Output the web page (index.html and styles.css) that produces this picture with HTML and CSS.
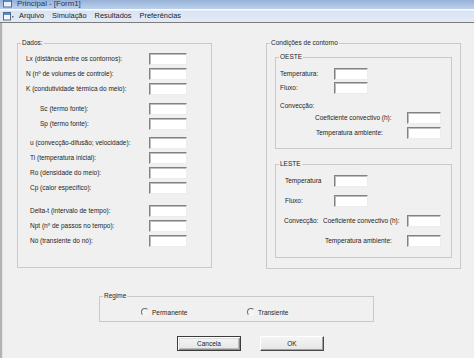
FILE: index.html
```html
<!DOCTYPE html>
<html lang="pt">
<head>
<meta charset="utf-8">
<title>Principal - [Form1]</title>
<link rel="stylesheet" href="styles.css">
</head>
<body>
<div class="window">
  <div class="titlebar">
    <svg class="title-icon" width="9" height="8" viewBox="0 0 9 8"><rect x="0.5" y="-1" width="8" height="8" fill="#e8eef7" stroke="#50709c"/><rect x="1" y="-1" width="7" height="3" fill="#5b86c0"/></svg>
    <span class="title">Principal - [Form1]</span>
  </div>
  <div class="menubar">
    <svg class="menu-icon" width="11" height="9" viewBox="0 0 11 9"><rect x="0.5" y="0.5" width="7" height="7.5" fill="#f4f7fb" stroke="#4d6a94"/><rect x="1" y="1" width="6" height="2" fill="#5f8ac4"/><rect x="9" y="4" width="1.5" height="1.5" fill="#6a6a6a"/></svg>
    <span class="menu-item first">Arquivo</span>
    <span class="menu-item">Simulação</span>
    <span class="menu-item">Resultados</span>
    <span class="menu-item">Preferências</span>
  </div>
  <div class="client">
    <div class="groups">
      <div class="group dados">
        <span class="legend">Dados:</span>
        <div class="rows">
          <div class="sec">
            <div class="row"><span class="lbl">Lx (distância entre os contornos):</span><span class="input"></span></div>
            <div class="row"><span class="lbl">N (nº de volumes de controle):</span><span class="input"></span></div>
            <div class="row"><span class="lbl">K (condutividade térmica do meio):</span><span class="input"></span></div>
          </div>
          <div class="sec sec2">
            <div class="row"><span class="lbl">Sc (termo fonte):</span><span class="input"></span></div>
            <div class="row"><span class="lbl">Sp (termo fonte):</span><span class="input"></span></div>
          </div>
          <div class="sec sec3">
            <div class="row"><span class="lbl">u (convecção-difusão; velocidade):</span><span class="input"></span></div>
            <div class="row"><span class="lbl">Ti (temperatura inicial):</span><span class="input"></span></div>
            <div class="row"><span class="lbl">Ro (densidade do meio):</span><span class="input"></span></div>
            <div class="row"><span class="lbl">Cp (calor específico):</span><span class="input"></span></div>
          </div>
          <div class="sec sec4">
            <div class="row"><span class="lbl">Delta-t (intervalo de tempo):</span><span class="input"></span></div>
            <div class="row"><span class="lbl">Npt (nº de passos no tempo):</span><span class="input"></span></div>
            <div class="row"><span class="lbl">Nó (transiente do nó):</span><span class="input"></span></div>
          </div>
        </div>
      </div>
      <div class="group contorno">
        <span class="legend">Condições de contorno</span>
        <div class="group sub oeste">
          <span class="legend">OESTE</span>
          <div class="row"><span class="lbl w54">Temperatura:</span><span class="input small"></span></div>
          <div class="row mt2"><span class="lbl w54">Fluxo:</span><span class="input small"></span></div>
          <div class="conv-title">Convecção:</div>
          <div class="row mt2 ind35"><span class="lbl flex">Coeficiente convectivo (h):</span><span class="input small"></span></div>
          <div class="row mt3 ind36"><span class="lbl flex">Temperatura ambiente:</span><span class="input small"></span></div>
        </div>
        <div class="group sub leste">
          <span class="legend">LESTE</span>
          <div class="row"><span class="lbl w49">Temperatura</span><span class="input small"></span></div>
          <div class="row mt8"><span class="lbl w49">Fluxo:</span><span class="input small"></span></div>
          <div class="row mt8"><span class="lbl conv">Convecção:</span><span class="lbl flex">Coeficiente convectivo (h):</span><span class="input small"></span></div>
          <div class="row mt8 ind40"><span class="lbl flex">Temperatura ambiente:</span><span class="input small"></span></div>
        </div>
      </div>
    </div>
    <div class="group regime">
      <span class="legend">Regime</span>
      <div class="radios">
        <label class="option"><span class="radio"></span><span>Permanente</span></label>
        <label class="option"><span class="radio"></span><span>Transiente</span></label>
      </div>
    </div>
    <div class="buttons">
      <button class="btn default">Cancela</button>
      <button class="btn">OK</button>
    </div>
  </div>
</div>
</body>
</html>
```
FILE: styles.css
```css
* { box-sizing: border-box; }
html, body { margin: 0; padding: 0; }
body {
  width: 474px;
  height: 358px;
  overflow: hidden;
  background: #f0f0f0;
  font-family: "Liberation Sans", Arial, sans-serif;
  color: #1d1d1d;
}
.window { display: flex; flex-direction: column; height: 358px; }

.titlebar {
  height: 9px;
  overflow: hidden;
  background: linear-gradient(#96b1d6, #a9c1e2 50%, #bcd0ea);
  display: flex;
  align-items: flex-end;
  padding-left: 3px;
}
.title-icon { margin-bottom: 1px; }
.title {
  font-size: 7.8px;
  line-height: 9px;
  margin-left: 5px;
  margin-bottom: 1px;
  color: #24385a;
}

.menubar {
  height: 14px;
  display: flex;
  align-items: center;
  padding-left: 3px;
  background: linear-gradient(#fbfdff 0, #fbfdff 1px, #d9e4f3 2px, #e2eaf5 100%);
  border-bottom: 1px solid #7b7b7b;
  font-size: 7.4px;
  color: #222;
}
.menu-icon { margin-top: 1px; }
.menu-item { padding: 0 4px; }
.menu-item.first { margin-left: 1px; }

.client {
  flex: 1;
  display: flex;
  flex-direction: column;
  border-left: 2px solid #b3b3b3;
  box-shadow: inset 1px 0 0 #e4e4e4;
  padding-left: 15px;
  font-size: 6.5px;
}
.groups { display: flex; gap: 54px; margin-top: 20px; }

.group { position: relative; border: 1px solid #c6cacd; }
.legend {
  position: absolute;
  top: -5px;
  left: 3px;
  padding: 0 1px;
  background: #f0f0f0;
  line-height: 8px;
  white-space: nowrap;
}

.dados { width: 195px; height: 225px; padding: 9px 24px 0 8px; }
.rows, .sec { display: flex; flex-direction: column; gap: 3px; }
.sec2 { margin-top: 5px; }
.sec3 { margin-top: 4px; }
.sec4 { margin-top: 8px; }
.sec2 .lbl { padding-left: 14px; }
.sec3 .lbl, .sec4 .lbl { padding-left: 4px; }

.row { display: flex; align-items: center; height: 12px; }
.lbl { flex: 1; white-space: nowrap; line-height: 8px; }
.lbl.flex { flex: 1; }
.input {
  flex: none;
  width: 38px;
  height: 12px;
  background: #fff;
  border: 1px solid;
  border-color: #828282 #ececec #ececec #828282;
  box-shadow: inset 1px 1px 0 #bdbdbd;
}
.input.small { width: 34px; }

.contorno { width: 195px; height: 226px; padding: 13px 8px 0 8px; }
.sub { width: 177px; }
.oeste { height: 92px; padding: 10px 0 0 4px; }
.leste { height: 94px; margin-top: 15px; padding: 10px 0 0 9px; }
.w54 { flex: none; width: 54px; }
.w49 { flex: none; width: 49px; }
.conv { flex: none; width: 39px; margin-left: -1px; }
.mt2 { margin-top: 2px; }
.mt3 { margin-top: 3px; }
.mt8 { margin-top: 8px; }
.ind35 { padding-left: 35px; }
.ind36 { padding-left: 36px; }
.ind40 { padding-left: 40px; }
.oeste .row, .leste .row { padding-right: 10px; }
.conv-title { margin-top: 8px; height: 8px; line-height: 8px; }

.regime { width: 275px; height: 26px; margin: 27px 0 0 82px; }
.radios { display: flex; align-items: center; height: 10px; margin: 10px 0 0 41px; }
.option { display: flex; align-items: center; gap: 3px; width: 106px; }
.radio {
  width: 8px;
  height: 8px;
  border-radius: 50%;
  border: 1px solid;
  border-color: #6f6f6f #f6f6f6 #f6f6f6 #6f6f6f;
  background: #f4f4f4;
}

.buttons { display: flex; gap: 19px; margin: 14px 0 0 160px; }
.btn {
  width: 64px;
  height: 15px;
  padding: 0;
  font-family: "Liberation Sans", Arial, sans-serif;
  font-size: 6.5px;
  color: #1d1d1d;
  background: linear-gradient(#f4f4f4, #e6e6e6);
  border: 1px solid;
  border-color: #ffffff #4a4a4a #4a4a4a #ffffff;
  box-shadow: inset -1px -1px 0 #a0a0a0;
}
.btn.default {
  border-color: #3c3c3c;
  box-shadow: inset 1px 1px 0 #ffffff, inset -1px -1px 0 #8a8a8a, inset 2px 2px 0 #dedede, inset -2px -2px 0 #bcbcbc;
}
```
